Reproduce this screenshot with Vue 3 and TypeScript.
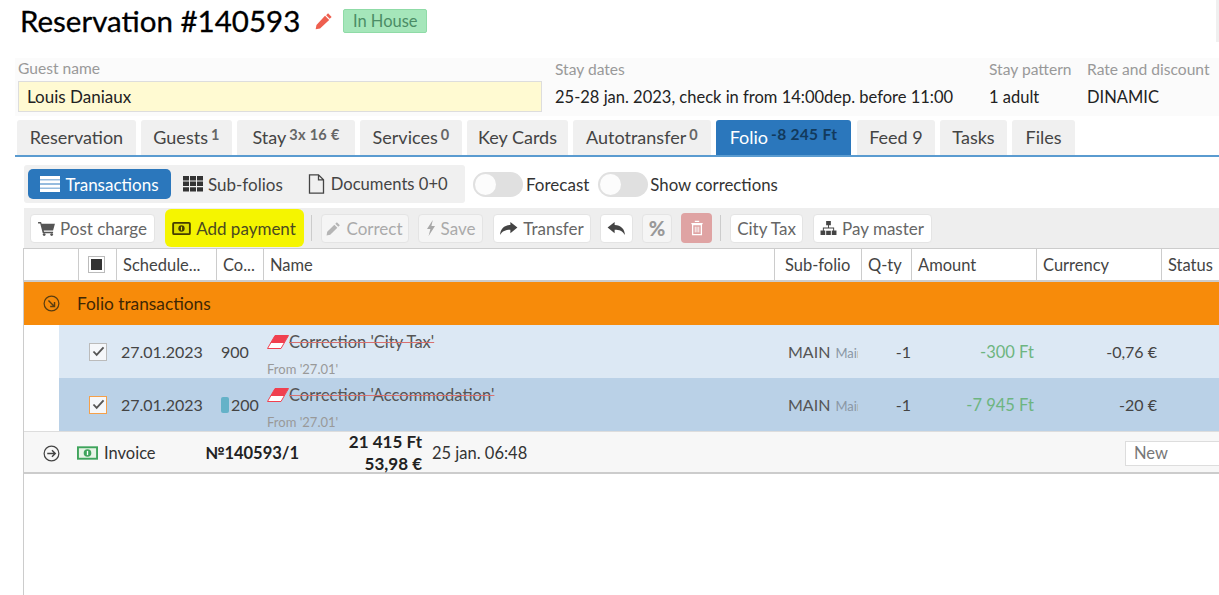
<script setup lang="ts">
interface Col { label: string; check?: boolean }
const columns: Col[] = [
  { label: '' }, { label: '', check: true }, { label: 'Schedule...' }, { label: 'Co...' }, { label: 'Name' },
  { label: 'Sub-folio' }, { label: 'Q-ty' }, { label: 'Amount' }, { label: 'Currency' }, { label: 'Status' },
]
interface Row { date: string; code: string; name: string; amount: string; currency: string; selected: boolean; marker: boolean }
const rows: Row[] = [
  { date: '27.01.2023', code: '900', name: "Correction 'City Tax'", amount: '-300 Ft', currency: '-0,76 €', selected: false, marker: false },
  { date: '27.01.2023', code: '200', name: "Correction 'Accommodation'", amount: '-7 945 Ft', currency: '-20 €', selected: true, marker: true },
]
const tabs = [
  { label: 'Reservation', sub: '', w: 119 },
  { label: 'Guests', sub: '1', w: 91 },
  { label: 'Stay', sub: '3x 16 €', w: 118 },
  { label: 'Services', sub: '0', w: 102 },
  { label: 'Key Cards', sub: '', w: 101 },
  { label: 'Autotransfer', sub: '0', w: 138 },
  { label: 'Folio', sub: '-8 245 Ft', w: 135, active: true },
  { label: 'Feed 9', sub: '', w: 78 },
  { label: 'Tasks', sub: '', w: 67 },
  { label: 'Files', sub: '', w: 63 },
]
</script>

<template>
  <div class="page">
    <span class="edge"></span>
    <header class="title-row">
      <h1>Reservation #140593</h1>
      <svg class="pencil" viewBox="0 0 16 16" width="18" height="18"><path d="M11.6 1.2l3.2 3.2-1.7 1.7-3.2-3.2zM8.9 3.4l3.700 3.700-8.100 7.600L.6 15.400l.7-3.900z" fill="#ee5f4f"/></svg>
      <span class="badge">In House</span>
    </header>

    <section class="info">
      <div class="field guest">
        <label>Guest name</label>
        <div class="guest-input">Louis Daniaux</div>
      </div>
      <div class="field dates">
        <label>Stay dates</label>
        <div class="value">25-28 jan. 2023, check in from 14:00dep. before 11:00</div>
      </div>
      <div class="field pattern">
        <label>Stay pattern</label>
        <div class="value">1 adult</div>
      </div>
      <div class="field rate">
        <label>Rate and discount</label>
        <div class="value">DINAMIC</div>
      </div>
    </section>

    <nav class="tabs">
      <div v-for="t in tabs" :key="t.label" class="tab" :class="{ active: t.active }" :style="{ width: t.w + 'px' }">
        {{ t.label }}<sup v-if="t.sub">{{ t.sub }}</sup>
      </div>
    </nav>

    <section class="views">
      <div class="view-group">
        <button class="view on">
          <svg viewBox="0 0 20 16" width="20" height="16"><path d="M0 0h20v3.4H0zM0 4.2h20v3.4H0zM0 8.4h20v3.4H0zM0 12.6h20V16H0z" fill="#fff"/></svg>
          Transactions
        </button>
        <button class="view">
          <svg viewBox="0 0 20 16" width="20" height="16"><path d="M0 0h6v4.4H0zM7 0h6v4.4H7zM14 0h6v4.4h-6zM0 5.6h6V10H0zM7 5.6h6V10H7zM14 5.6h6V10h-6zM0 11.2h6v4.4H0zM7 11.2h6v4.4H7zM14 11.2h6v4.4h-6z" fill="#333"/></svg>
          Sub-folios
        </button>
        <button class="view docs">
          <svg viewBox="0 0 16 20" width="17" height="20"><path d="M1 .8h9l5 5v13.4H1zM10 .8v5h5" fill="none" stroke="#444" stroke-width="1.3"/></svg>
          Documents 0+0
        </button>
      </div>
      <div class="toggle"><i></i></div><span class="toggle-label">Forecast</span>
      <div class="toggle second"><i></i></div><span class="toggle-label tight">Show corrections</span>
    </section>

    <section class="actions">
      <button class="act" style="width:125px">
        <svg viewBox="0 0 18 16" width="17" height="15"><path d="M0 1h3.2l.6 2H18l-2 7H6l.4 1.4H16V13H5L2.3 2.6H0z" fill="#555"/><circle cx="6.5" cy="14.5" r="1.5" fill="#555"/><circle cx="14.5" cy="14.5" r="1.5" fill="#555"/></svg>
        Post charge
      </button>
      <button class="pay">
        <svg viewBox="0 0 20 14" width="19" height="13"><rect x="1" y="1" width="18" height="12" rx="1" fill="#dede00" stroke="#443c00" stroke-width="2"/><circle cx="10" cy="7" r="3.4" fill="#443c00"/><path d="M9.4 5h1.2v4H9.4z" fill="#e8e800"/></svg>
        Add payment
      </button>
      <span class="sep first"></span>
      <button class="act off" style="width:88px">
        <svg viewBox="0 0 16 16" width="15" height="15"><path d="M11.6 1.2l3.2 3.2-1.7 1.7-3.2-3.2zM8.9 3.9l3.2 3.2-7.6 7.6-3.9.7.7-3.900z" fill="#b5b5b5"/></svg>
        Correct
      </button>
      <button class="act off" style="width:65px">
        <svg viewBox="0 0 10 16" width="10" height="16"><path d="M6.8 0L1 9h3.4L2.6 16 9 6H5.4z" fill="#a8a8a8"/></svg>
        Save
      </button>
      <button class="act" style="width:98px">
        <svg viewBox="0 0 20 16" width="19" height="15"><path d="M12 1l7.5 6L12 13V9.3C7 9.300 3.500 10.500 1 15c.3-6.500 4-10.500 11-10.800z" fill="#444"/></svg>
        Transfer
      </button>
      <button class="act icon" style="width:33px">
        <svg viewBox="0 0 20 16" width="19" height="15"><path d="M8 1L.5 7 8 13V9.300c5 0 8.500 1.200 11 5.700-.3-6.500-4-10.500-11-10.800z" fill="#444"/></svg>
      </button>
      <button class="act off icon pct" style="width:30px">%</button>
      <button class="trash">
        <svg viewBox="0 0 16 18" width="14" height="16"><path d="M5.500 1.500h5M1.500 4h13" stroke="#fff" stroke-width="1.500" fill="none"/><path d="M3 5h10v11.500H3z" fill="none" stroke="#fff" stroke-width="1.500"/><path d="M6 7.500v6.500M8 7.500v6.500M10 7.500v6.500" stroke="#fff" stroke-width="1"/></svg>
      </button>
      <span class="sep"></span>
      <button class="act plain" style="width:73px">City Tax</button>
      <button class="act" style="width:119px">
        <svg viewBox="0 0 18 16" width="17" height="15"><path d="M6.500 0h5v4.500h-2v2.500H15v3h2.500v5h-5v-5H14V8H4v2h1.500v5h-5v-5H3V7h5.500V4.500h-2zM6.500 10.500h5v4.500h-5z" fill="#444"/></svg>
        Pay master
      </button>
    </section>

    <section class="table">
      <div class="grid head">
        <div v-for="(c, i) in columns" :key="i" class="th">
          <span v-if="c.check" class="head-check"><b></b></span>
          <template v-else>{{ c.label }}</template>
        </div>
      </div>

      <div class="group">
        <svg class="circle-icon" viewBox="0 0 18 18" width="17" height="17"><circle cx="9" cy="9" r="7.800" fill="none" stroke="#5a3d10" stroke-width="1.300"/><path d="M5.800 5.800l6 6M12.200 7.500v4.600H7.600" fill="none" stroke="#5a3d10" stroke-width="1.500"/></svg>
        <span>Folio transactions</span>
      </div>

      <div v-for="r in rows" :key="r.code" class="row" :class="{ selected: r.selected }">
        <div class="cell box-cell"><span class="check" :class="{ hot: r.selected }">
          <svg viewBox="0 0 14 12" width="13" height="11"><path d="M1.500 6l3.500 3.800L12.500 1.500" fill="none" stroke="#555" stroke-width="2"/></svg>
        </span></div>
        <div class="cell date">{{ r.date }}</div>
        <div class="cell code"><i v-if="r.marker" class="marker"></i>{{ r.code }}</div>
        <div class="cell name">
          <div class="name-line">
            <svg viewBox="0 0 22 14" width="22" height="14"><path d="M8 .5h13.500L14 13.500H.5z" fill="#fff" stroke="#f0404f" stroke-width="1"/><path d="M8 .5h13.500L17 8H3.500z" fill="#f0404f"/></svg>
            <s>{{ r.name }}</s>
          </div>
          <div class="from">From '27.01'</div>
        </div>
        <div class="cell sub"><span class="main">MAIN</span><span class="mair">Main</span></div>
        <div class="cell qty">-1</div>
        <div class="cell amount">{{ r.amount }}</div>
        <div class="cell currency">{{ r.currency }}</div>
        <div class="cell"></div>
      </div>

      <div class="invoice">
        <svg class="circle-icon" viewBox="0 0 18 18" width="17" height="17"><circle cx="9" cy="9" r="7.800" fill="none" stroke="#444" stroke-width="1.300"/><path d="M4.500 9h8.500M9.500 5.500L13 9l-3.500 3.500" fill="none" stroke="#444" stroke-width="1.500"/></svg>
        <svg class="money" viewBox="0 0 22 14" width="21" height="14"><rect width="22" height="14" fill="#3fa45c"/><rect x="2" y="2" width="18" height="10" fill="#e6f3e6"/><circle cx="11" cy="7" r="4" fill="#3fa45c"/><path d="M10.300 4.800h1.400v4.400h-1.400z" fill="#fff"/></svg>
        <span class="inv-label">Invoice</span>
        <b class="inv-no">№140593/1</b>
        <b class="inv-sum">21 415 Ft<br>53,98 €</b>
        <span class="inv-date">25 jan. 06:48</span>
        <span class="inv-status">New</span>
      </div>
    </section>
  </div>
</template>

<style>
html, body { margin: 0; background: #fff; overflow: hidden; }
</style>

<style scoped>
.page {
  position: relative;
  width: 1219px;
  height: 595px;
  overflow: hidden;
  font-family: Lato, "Noto Sans", sans-serif;
  font-size: 16px;
  color: #333;
  background: #fff;
}
.edge { position: absolute; right: 0; top: 0; width: 3px; height: 42px; background: #f0f0f0; }
.title-row { display: flex; align-items: center; height: 44px; padding: 0 0 3px 20px; box-sizing: border-box; }
h1 { margin: 0; font-size: 29.500px; font-weight: 400; color: #000; white-space: nowrap; -webkit-text-stroke: 0.3px #000; }
.pencil { margin-left: 15px; }
.badge {
  margin-left: 10px; width: 84px; height: 24px; box-sizing: border-box;
  background: #a5e6ba; border: 1px solid #8fdba7; border-radius: 2px;
  color: #4b8d66; font-size: 16.500px; line-height: 22px; text-align: center;
}
.info {
  display: flex; margin: 14px 0 0 15px; height: 58px; background: #fbfbfb;
}
.field label { display: block; font-size: 15.600px; color: #999; line-height: 18px; white-space: nowrap; }
.guest { width: 540px; padding-left: 3px; box-sizing: border-box; }
.guest label { margin-top: 1px; }
.guest-input {
  margin-top: 4px; width: 524px; height: 31px; box-sizing: border-box;
  background: #fffad2; border: 1px solid #ddd; padding-left: 8px; line-height: 29px; color: #222; font-size: 17px;
}
.dates { width: 434px; }
.pattern { width: 98px; }
.field.dates label, .field.pattern label, .field.rate label { margin-top: 2px; }
.value { margin-top: 7px; line-height: 24px; color: #222; white-space: nowrap; font-size: 16.500px; }
.tabs {
  display: flex; gap: 5px; margin: 4px 0 0 15px; padding-left: 2px;
  border-bottom: 2px solid #5a9bd0; box-sizing: border-box; height: 37px;
}
.tab {
  flex: none; box-sizing: border-box; height: 35px; background: #f0f0f0; border-radius: 3px 3px 0 0;
  text-align: center; line-height: 34px; font-size: 18px; color: #444; white-space: nowrap;
}
.tab sup { font-size: 14.500px; font-weight: 700; color: #666; margin-left: 3px; vertical-align: 4px; line-height: 0; letter-spacing: 0.3px; }
.tab.active { background: #2b77bc; color: #fff; margin-right: 1px; }
.tab.active sup { color: #123a5c; font-size: 15.500px; }
.views { display: flex; align-items: center; margin: 8px 0 0 24px; height: 38px; }
.view-group {
  display: flex; align-items: center; width: 441px; height: 38px; box-sizing: border-box;
  background: #f0f0f0; border-radius: 3px; padding-left: 4px; gap: 12px;
}
button { font: inherit; border: 0; padding: 0; margin: 0; }
.view {
  display: flex; align-items: center; gap: 5px; height: 30px; background: transparent; color: #444;
  font-size: 17px; white-space: nowrap;
}
.view.docs { margin-left: 13px; gap: 6px; font-size: 16.600px; }
.view.on { width: 143px; justify-content: center; background: #2b77bc; color: #fff; border-radius: 5px; }
.toggle {
  width: 50px; height: 25px; margin-left: 8px; background: #e0e0e0; border-radius: 13px; position: relative; flex: none;
}
.toggle.second { margin-left: 9px; }
.toggle i {
  position: absolute; left: 2px; top: 2px; width: 21px; height: 21px; background: #fcfcfc; border-radius: 50%;
}
.toggle-label { margin-left: 3px; font-size: 17px; color: #333; white-space: nowrap; }
.toggle-label.tight { margin-left: 2px; font-size: 16.800px; }
.actions {
  display: flex; align-items: center; margin: 5px 0 0 24px; padding-left: 6px; height: 40px; box-sizing: border-box;
  background: #eee;
}
.act {
  flex: none; display: flex; align-items: center; justify-content: center; gap: 5px; height: 29px; margin-right: 9.500px;
  background: #fff; border: 1px solid #e4e4e4; box-sizing: border-box; border-radius: 4px; color: #666; font-size: 17px; white-space: nowrap;
}
.act.off { background: #f5f5f5; color: #aaa; }
.act.plain { color: #666; }
.act.icon { margin-right: 9px; }
.act.off.pct { font-weight: 900; font-size: 20px; color: #999; }
.pay {
  flex: none; display: flex; align-items: center; justify-content: center; gap: 5px; margin-left: 0; width: 139px; height: 38px;
  background: #f5f500; border-radius: 6px; color: #4a4a20; font-size: 17px; white-space: nowrap;
}
.sep { flex: none; width: 1px; height: 26px; background: #ccc; margin-right: 9px; }
.sep.first { margin-left: 7px; }
.trash {
  flex: none; width: 31px; height: 30px; background: #dfa3a3; border-radius: 4px; margin-right: 8px;
  display: flex; align-items: center; justify-content: center;
}
.table {
  border-left: 1px solid #ccc; margin-left: 23px; height: 348px; width: 1196px; box-sizing: border-box;
}
.grid {
  display: grid; grid-template-columns: 55px 38px 100px 47px 511px 87px 50px 125px 125px 58px;
}
.head { height: 34px; border-bottom: 2px solid #ccc; box-sizing: border-box; border-top: 1px solid #ccc; }
.th {
  display: flex; align-items: center; padding-left: 6px; box-sizing: border-box; border-right: 1px solid #ccc;
  font-size: 16.500px; color: #444; white-space: nowrap; overflow: hidden;
}
.th:nth-child(6) { padding-left: 10px; }
.th:last-child { border-right: 0; }
.head-check {
  width: 17px; height: 17px; margin-left: 3px; border: 1px solid #bbb; box-sizing: border-box; display: flex; align-items: center; justify-content: center; background: #fff; flex: none;
}
.head-check b { width: 11px; height: 11px; background: #333; }
.group {
  display: flex; align-items: center; height: 43px; background: #f78b0a; color: #3f2704; font-size: 17.300px;
}
.circle-icon { margin-left: 19px; flex: none; }
.group span { margin-left: 17px; }
.row {
  display: grid; grid-template-columns: 57px 100px 47px 511px 87px 50px 125px 125px 59px;
  height: 53px; margin-left: 35px; background: #dce8f4; align-items: center;
}
.row.selected { background: #bad1e7; }
.cell { white-space: nowrap; overflow: hidden; color: #444; }
.box-cell { display: flex; padding-left: 30px; }
.check {
  width: 18px; height: 18px; box-sizing: border-box; background: #f5f7fa; border: 1px solid #bbb;
  display: flex; align-items: center; justify-content: center;
}
.check.hot { border: 1px solid #f5a04a; }
.date { padding-left: 5px; }
.code { padding-left: 5px; display: flex; align-items: center; }
.marker { width: 8px; height: 16px; background: #65b2c8; border-radius: 2px; margin-right: 2px; }
.name { padding-left: 4px; align-self: start; }
.name-line { display: flex; align-items: center; height: 20px; margin-top: 7px; }
.name-line s { margin-left: 0; text-decoration-color: #d87070; color: #555; font-size: 16.500px; }
.from { margin-top: 9px; font-size: 13px; color: #999; line-height: 16px; }
.sub { padding-left: 14px; display: flex; align-items: baseline; }
.main { color: #555; }
.mair { font-size: 13px; color: #8a97a5; margin-left: 5px; width: 23px; overflow: hidden; }
.qty { text-align: right; padding-right: 0; }
.amount { text-align: right; padding-right: 2px; color: #6db580; font-size: 16.500px; }
.currency { text-align: right; padding-right: 4px; }
.invoice {
  display: flex; align-items: center; height: 43px; background: #f7f7f7; padding-top: 2px;
  border-top: 1px solid #ddd; border-bottom: 2px solid #ccc; box-sizing: border-box; margin-top: 0; white-space: nowrap; font-size: 16.500px;
}
.money { margin-left: 17px; flex: none; }
.inv-label { margin-left: 6px; width: 101px; flex: none; }
.inv-no { width: 130px; flex: none; font-weight: 700; color: #222; }
.inv-sum { width: 87px; flex: none; text-align: right; line-height: 22px; color: #222; margin-top: -1px; font-size: 17px; }
.inv-date { margin-left: 10px; width: 693px; flex: none; }
.inv-status {
  flex: none; box-sizing: border-box; width: 100px; height: 25px; background: #fff; border: 1px solid #ddd; padding-left: 8px; line-height: 23px; color: #777;
}
</style>
